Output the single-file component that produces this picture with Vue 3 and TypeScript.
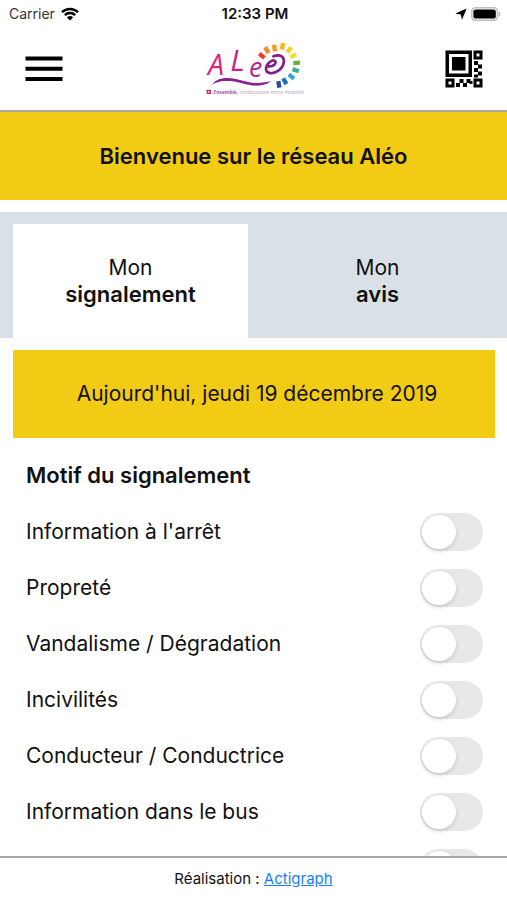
<script setup lang="ts">
import { ref } from 'vue'

interface Motif {
  id: string
  label: string
  checked: boolean
}

const tabs = [
  { id: 'signalement', label: 'signalement' },
  { id: 'avis', label: 'avis' },
]
const activeTab = ref('signalement')

const motifs = ref<Motif[]>([
  { id: 'arret', label: "Information à l'arrêt", checked: false },
  { id: 'proprete', label: 'Propreté', checked: false },
  { id: 'vandalisme', label: 'Vandalisme / Dégradation', checked: false },
  { id: 'incivilites', label: 'Incivilités', checked: false },
  { id: 'conducteur', label: 'Conducteur / Conductrice', checked: false },
  { id: 'bus', label: 'Information dans le bus', checked: false },
])
const other = ref(false)

// Sun rays of the logo: position, rotation and colour of each block
const rays = [
  { x: 201, y: 167, r: -50, c: '#ee3a2c' },
  { x: 216, y: 150, r: -28, c: '#f08a2a' },
  { x: 239, y: 144, r: -8, c: '#f39a25' },
  { x: 263, y: 139, r: 14, c: '#f7b21f' },
  { x: 283, y: 150, r: 36, c: '#f5d31c' },
  { x: 295, y: 168, r: 62, c: '#f0dc2a' },
  { x: 305, y: 189, r: 86, c: '#6fae3c' },
  { x: 302, y: 211, r: 108, c: '#45a99a' },
  { x: 289, y: 230, r: 128, c: '#3a9fd8' },
  { x: 269, y: 244, r: 150, c: '#2470b4' },
  { x: 251, y: 253, r: 170, c: '#23509c' },
]
</script>

<template>
  <div class="app">
    <header class="header">
      <div class="status">
        <span class="carrier">
          Carrier
          <svg class="wifi" viewBox="0 0 18 14" aria-hidden="true">
            <path d="M1 5.2a11.5 11.5 0 0 1 16 0M3.8 8.1a7.5 7.5 0 0 1 10.4 0" />
            <path class="solid" d="M9 13.6 5.9 10.4a4.5 4.5 0 0 1 6.2 0z" />
          </svg>
        </span>
        <time class="clock">12:33 PM</time>
        <span class="indicators">
          <svg class="arrow" viewBox="0 0 12 12" aria-hidden="true">
            <path d="M11.6.4 7 11.8 5.8 6.4.4 5.6z" />
          </svg>
          <svg class="battery" viewBox="0 0 30 14" aria-hidden="true">
            <rect x=".8" y=".8" width="25.6" height="12.4" rx="3.6" fill="#fff" stroke="#bdbdbd" stroke-width="1.4" />
            <rect x="2.4" y="2.4" width="22.4" height="9.2" rx="2.2" />
            <path d="M27.6 4.6q2 .8 2 2.4t-2 2.4z" fill="#bdbdbd" />
          </svg>
        </span>
      </div>
      <nav class="nav">
        <button class="icon-button" type="button" aria-label="Menu">
          <svg class="menu-icon" viewBox="0 0 38 38" aria-hidden="true">
            <path d="M.5 8.500h37M.5 18.700h37M.5 28.900h37" />
          </svg>
        </button>
        <svg class="logo" viewBox="30 120 294 171" role="img" aria-label="Aléo">
          <rect
            v-for="ray in rays"
            :key="ray.x"
            :x="ray.x - 7"
            :y="ray.y - 10"
            width="13"
            height="20"
            :fill="ray.c"
            :transform="`rotate(${ray.r} ${ray.x} ${ray.y})`"
          />
          <text x="39" y="225" class="letter" font-size="86" fill="#df2379">A</text>
          <text x="106" y="214" class="letter" font-size="90" fill="#cf2085">L</text>
          <text x="162" y="230" class="letter" font-size="80" fill="#bd2089">e</text>
          <path
            d="M221 199c14 2 25-10 19-16-8-6-26 8-27 22-1 14 14 18 28 12 20-8 30-28 24-42-5-9-18-10-30-6"
            fill="none"
            stroke="#7d208b"
            stroke-width="8"
            stroke-linecap="round"
          />
          <path
            d="M51 254c13-17 33-22 57-19 26 3 48 14 78 14 17 0 31-3 42-5-12 9-25 13-42 13-31 0-56-13-84-14-29-1-41 5-51 11z"
            fill="#8b2191"
          />
          <rect x="35" y="269" width="13" height="13" rx="2" fill="#cf2067" />
          <path d="M41.5 272v7M38 275.5h7" stroke="#fff" stroke-width="2" />
          <text x="55" y="281" class="slogan" fill="#8a3f96">
            <tspan font-weight="600">Ensemble,</tspan>
            <tspan dx="4" fill="#b79bc0">construisons notre mobilité</tspan>
          </text>
        </svg>
        <button class="icon-button" type="button" aria-label="QR code">
          <svg class="qr-icon" viewBox="0 0 38 38" aria-hidden="true">
            <path
              fill-rule="evenodd"
              d="M.5.5h26.500v26.500H.5zM4 4v19.500h19.500V4zM7 7h13.500v13.500H7zM28.500.5h9v9h-9zM31.500 3.500v3h3v-3zM.5 28.500h9v9h-9zM3.500 31.500v3h3v-3zM28.500 28.500h9v9h-9zM31.500 31.500v3h3v-3z"
            />
            <path
              d="M29 11h4v4h-4zM33 14.500h4v4h-4zM29 18h4v4h-4zM33 21.500h4v4h-4zM29 24.500h4v3h-4zM11 33h4v4h-4zM14.500 29h4v4h-4zM18 33h4v4h-4zM21.500 29h4v4h-4zM24.500 31h3v3h-3z"
            />
          </svg>
        </button>
      </nav>
    </header>

    <main class="content">
      <h1 class="banner">Bienvenue sur le réseau Aléo</h1>

      <div class="tabs" role="tablist">
        <button
          v-for="tab in tabs"
          :key="tab.id"
          class="tab"
          :class="{ active: tab.id === activeTab }"
          type="button"
          role="tab"
          :aria-selected="tab.id === activeTab"
          @click="activeTab = tab.id"
        >
          Mon<br /><strong>{{ tab.label }}</strong>
        </button>
      </div>

      <p class="date">Aujourd'hui, jeudi 19 décembre 2019</p>

      <section class="motifs">
        <h2 class="title">Motif du signalement</h2>
        <label v-for="motif in motifs" :key="motif.id" class="row" :for="motif.id">
          <span>{{ motif.label }}</span>
          <input :id="motif.id" v-model="motif.checked" class="switch" type="checkbox" role="switch" />
        </label>
        <div class="row row-end">
          <input v-model="other" class="switch" type="checkbox" role="switch" aria-label="Autre" />
        </div>
      </section>
    </main>

    <footer class="footer">Réalisation :&nbsp;<a href="#actigraph">Actigraph</a></footer>
  </div>
</template>

<style>
body {
  margin: 0;
  background: #fff;
}
</style>

<style scoped>
.app {
  display: flex;
  flex-direction: column;
  height: 100vh;
  font-family: Inter, Roboto, 'Liberation Sans', sans-serif;
  font-size: 21px;
  line-height: 26px;
  color: #111;
}

.app *,
.app {
  box-sizing: border-box;
}

.header {
  flex: none;
  border-bottom: 2px solid #aaa69a;
}

.status {
  display: grid;
  grid-template-columns: 1fr auto 1fr;
  align-items: center;
  height: 27px;
  padding: 0 6px 0 9px;
  font-size: 14px;
  line-height: 20px;
}

.carrier,
.indicators {
  display: flex;
  align-items: center;
  gap: 6px;
}

.carrier {
  color: #333;
}

.indicators {
  justify-content: flex-end;
  gap: 4px;
}

.clock {
  font-size: 15px;
  font-weight: 600;
}

.wifi {
  width: 18px;
  height: 14px;
  fill: none;
  stroke: #000;
  stroke-width: 2.4;
}

.wifi .solid {
  fill: #000;
  stroke: none;
}

.arrow {
  width: 12px;
  height: 12px;
}

.battery {
  width: 30px;
  height: 14px;
}

.nav {
  display: flex;
  align-items: center;
  justify-content: space-between;
  height: 83px;
  padding: 0 24px 0 25px;
}

.icon-button {
  display: flex;
  padding: 0;
  border: 0;
  background: none;
  color: #000;
}

.menu-icon,
.qr-icon {
  width: 38px;
  height: 38px;
}

.menu-icon {
  stroke: #000;
  stroke-width: 4;
}

.logo {
  width: 98px;
  height: 57px;
  overflow: visible;
}

.letter {
  font-family: 'Open Sans', sans-serif;
  font-style: italic;
  font-weight: 500;
}

.slogan {
  font-family: 'Open Sans', sans-serif;
  font-style: italic;
  font-size: 16px;
}

.content {
  flex: 1;
  min-height: 0;
  overflow: hidden;
}

.banner {
  margin: 0;
  padding: 31px 12px;
  background: #f1cb14;
  text-align: center;
  font-size: 22px;
  font-weight: 600;
}

.tabs {
  display: grid;
  grid-template-columns: 235fr 259fr;
  margin-top: 12px;
  padding: 12px 0 0 13px;
  background: #dae1e6;
}

.tab {
  padding: 31px 0 30px;
  border: 0;
  background: transparent;
  color: inherit;
  font: inherit;
  text-align: center;
}

.tab.active {
  background: #fff;
}

.tab strong {
  font-size: 22px;
  font-weight: 600;
}

.date {
  margin: 12px 12px 0 13px;
  padding: 31px 12px 31px 18px;
  background: #f1cb14;
  text-align: center;
}

.motifs {
  padding: 10px 24px 0 26px;
}

.title {
  display: flex;
  align-items: center;
  height: 54px;
  margin: 0 0 2px;
  font-size: 22px;
  font-weight: 600;
}

.row {
  display: flex;
  align-items: center;
  justify-content: space-between;
  height: 56px;
}

.row-end {
  justify-content: flex-end;
}

.switch {
  display: flex;
  align-items: center;
  appearance: none;
  width: 63px;
  height: 38px;
  margin: 0;
  padding: 2px;
  border-radius: 19px;
  background: #e8e8e8;
}

.switch::before {
  content: '';
  width: 34px;
  height: 34px;
  border-radius: 50%;
  background: #fff;
  box-shadow: 0 2px 4px rgb(0 0 0 / 15%);
}

.switch:checked {
  background: #f1cb14;
}

.switch:checked::before {
  margin-left: auto;
}

.footer {
  display: flex;
  flex: none;
  align-items: center;
  justify-content: center;
  height: 44px;
  border-top: 2px solid #a8a8a8;
  font-size: 15px;
  line-height: 20px;
}

.footer a {
  color: #157efb;
}
</style>
